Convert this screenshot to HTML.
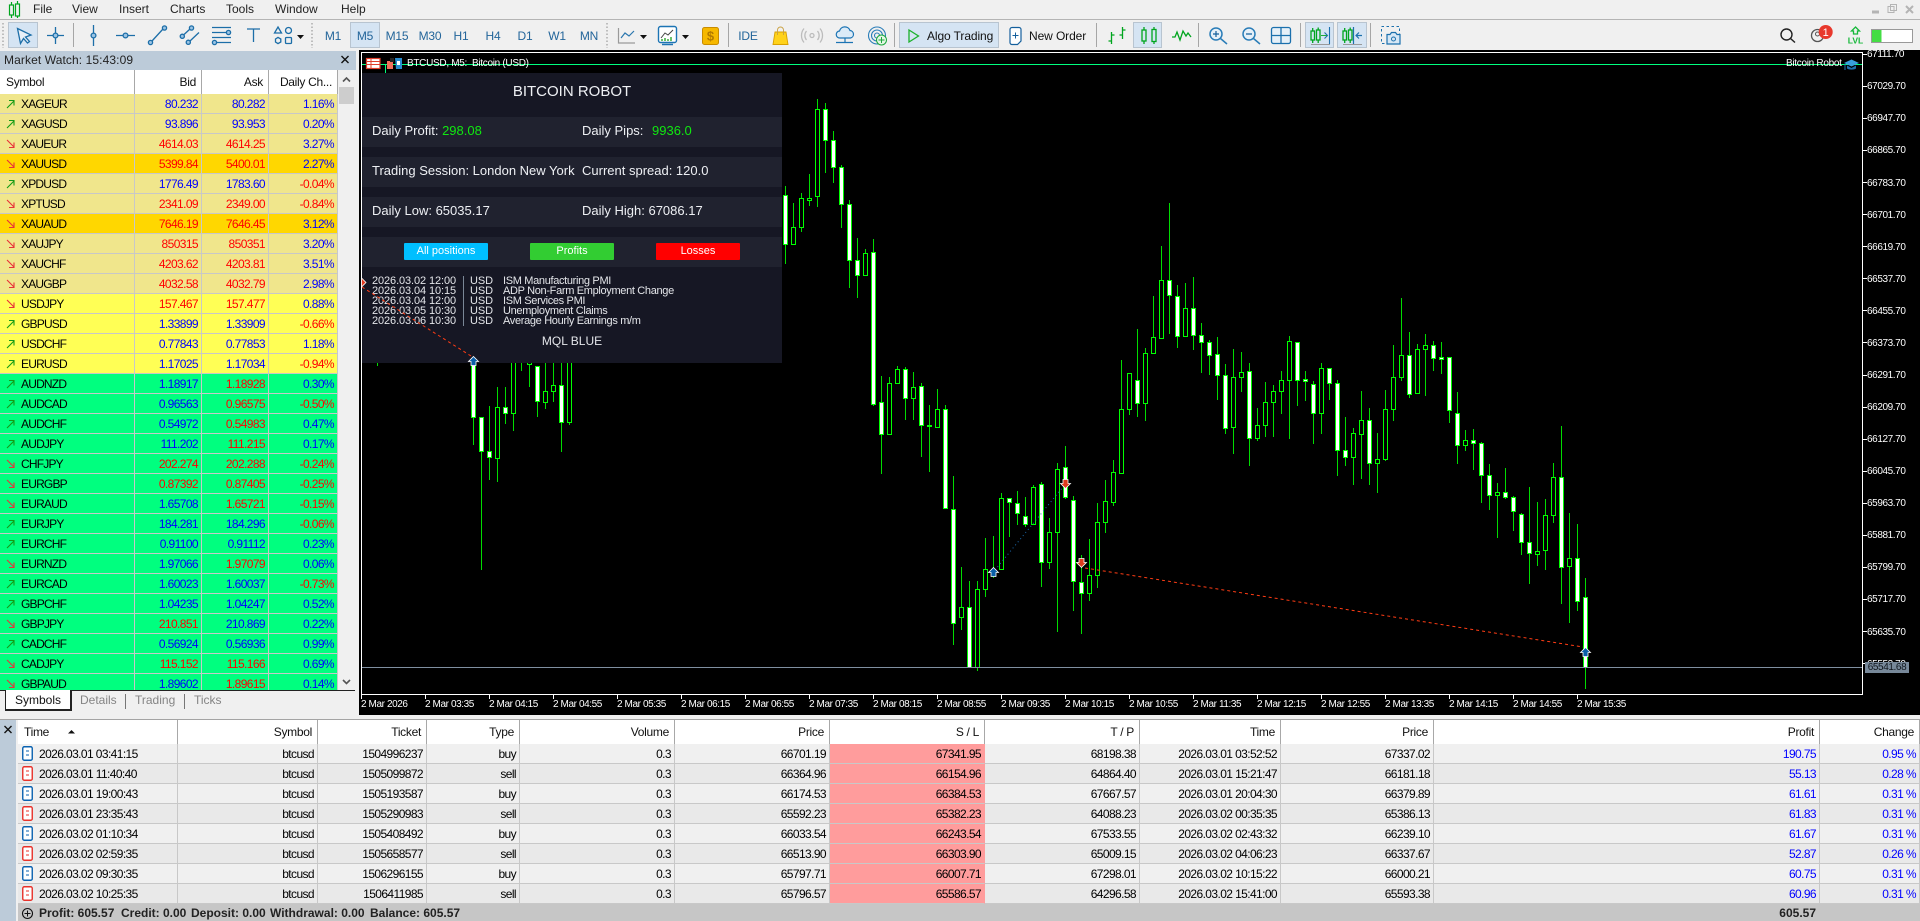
<!DOCTYPE html>
<html lang="en"><head><meta charset="utf-8"><title>MetaTrader 5</title>
<style>
html,body{margin:0;padding:0;width:1920px;height:921px;overflow:hidden;background:#f0f0f0;font-family:"Liberation Sans",Arial,sans-serif;font-size:12px;color:#000}
.t{position:absolute;white-space:nowrap;line-height:14px}
.abs{position:absolute}
svg.abs{left:0;top:0;overflow:visible}
table{border-collapse:separate;border-spacing:0;table-layout:fixed;position:absolute;letter-spacing:-.6px}
td,th{box-sizing:border-box;padding:0 3px 0 0;height:20px;line-height:16px;text-align:right;font-weight:normal;border-right:1px solid #c8c8c8;border-bottom:1px solid #c8c8c8;overflow:hidden;white-space:nowrap}
th{border-bottom:0;border-right:1px solid #a8a8a8;background:#fff;height:24px;color:#111;padding-right:5px;letter-spacing:-.3px}
#mw{left:0;top:70px;width:338px}
#mw td:first-child,#mw th:first-child{text-align:left}
#mw th:first-child{padding-left:6px}
#mw td:first-child{padding-left:6px;letter-spacing:-.8px}
#mw td{padding-right:3px}
#mw svg{width:9px;height:10px;margin-right:6px;vertical-align:-1px}
.k td{background:#f0e68c}.g td{background:#ffd700}.y td{background:#ffff55}.s td{background:#00ff7f}
.b{color:#0000ff}.r{color:#ff0000}
#tr{left:18px;top:720px;width:1902px}
#tr td:first-child,#tr th:first-child{text-align:left;padding-left:4px}
#tr th:first-child{padding-left:6px}
#tr svg{width:11px;height:15px;margin-right:6px;vertical-align:-3px}
#tr tr:nth-child(odd) td{background:#e9e9e9}
#tr td.l,#tr tr:nth-child(odd) td.l{background:#ff9c9c;border-right-color:#ff9c9c}
.d{font-size:13px;color:#eef0f4}
.gr{color:#10e810}
.btn{position:absolute;top:243px;height:17px;width:84px;border-radius:1px;color:#fff;font-size:11px;line-height:17px;text-align:center}
.n{font-size:11px;color:#e4e6ea;line-height:10px;letter-spacing:-.1px}
.e{letter-spacing:-.33px}
.ax{color:#fff;font-size:10px;letter-spacing:-.4px;line-height:12px;position:absolute;white-space:nowrap}
.m{position:absolute;top:2px;line-height:14px;font-size:12px;color:#222}
.tab{position:absolute;top:693px;font-size:12px;line-height:14px;color:#858585}
.rowp{position:absolute;left:362px;width:420px;height:30px;background:#20222f}
</style></head><body>

<svg width="0" height="0" style="position:absolute">
<defs>
<symbol id="u" viewBox="0 0 9 10"><path d="M1 9L8 2M3 1.5H8V6.5" fill="none" stroke="#159b15" stroke-width="1.1"/></symbol>
<symbol id="w" viewBox="0 0 9 10"><path d="M1 1L8 8M3 8.5H8V3.5" fill="none" stroke="#e8303a" stroke-width="1.1"/></symbol>
<symbol id="bd" viewBox="0 0 11 15"><rect x=".75" y=".75" width="9.5" height="13.5" rx="1.5" fill="#fff" stroke="#0a62b0" stroke-width="1.4"/><path d="M4 5h3M4 9h3" stroke="#0a62b0"/></symbol>
<symbol id="sd" viewBox="0 0 11 15"><rect x=".75" y=".75" width="9.5" height="13.5" rx="1.5" fill="#fff" stroke="#e8322a" stroke-width="1.4"/><path d="M4 5h3M4 9h3" stroke="#e8322a"/></symbol>
</defs>
</svg>

<!-- Menu -->
<div class="m" style="left:33px">File</div>
<div class="m" style="left:72px">View</div>
<div class="m" style="left:119px">Insert</div>
<div class="m" style="left:170px">Charts</div>
<div class="m" style="left:226px">Tools</div>
<div class="m" style="left:275px">Window</div>
<div class="m" style="left:341px">Help</div>
<div class="abs" style="left:0;top:19px;width:1920px;height:1px;background:#b4b4b4"></div>

<!-- Toolbar icons -->
<svg class="abs" width="1920" height="50" viewBox="0 0 1920 50" font-family="Liberation Sans, Arial, sans-serif">
<g fill="none" stroke="#00a51e" stroke-width="1.2"><rect x="9.5" y="5" width="4" height="10"/><rect x="15.5" y="4" width="4" height="12"/><path d="M11.5 2v3M11.5 15v3M17.5 1v3M17.5 16v2"/></g>
<g stroke="#b4b4b4" fill="none"><path d="M1872 12h7" stroke-width="3"/><rect x="1888" y="6.5" width="6" height="6"/><rect x="1890.5" y="4.5" width="6" height="6"/><path d="M1906 6l7 7M1913 6l-7 7" stroke-width="2"/></g>
<g stroke="#bdbdbd" stroke-dasharray="1.5 2" stroke-width="2" fill="none"><path d="M3 23V48M312 23V48M607 23V48"/></g>
<!-- active buttons -->
<g fill="#d5e4f3" stroke="#b8c4d0"><rect x="8.5" y="22.5" width="29" height="25"/><rect x="350.5" y="22.5" width="29" height="25"/><rect x="899.5" y="22.5" width="99" height="25"/><rect x="1133.5" y="22.5" width="28" height="25"/><rect x="1305.5" y="22.5" width="28" height="25"/><rect x="1337.5" y="22.5" width="29" height="25"/></g>
<g stroke="#a6a6a6" fill="none"><path d="M73.5 23V47M728.5 23V47M894.5 23V47M1096.5 23V47M1198.5 23V47M1300.5 23V47M1370.5 23V47"/></g>
<g fill="none" stroke="#1c6ea8" stroke-width="1.3">
<path d="M17.5 28.5L31 35L25.5 37L29.5 41.5L27.5 43L23.5 38.5L20.5 43.5Z" fill="#e8f0f8"/>
<path d="M47 35.5H64M55.5 27V44"/><circle cx="55.5" cy="35.5" r="2.4" fill="#9cc4e4"/>
<path d="M93.5 25V46"/><circle cx="93.5" cy="35.5" r="2.4" fill="#9cc4e4"/>
<path d="M116 35.5H135"/><circle cx="125.5" cy="35.5" r="2.4" fill="#9cc4e4"/>
<path d="M152 41L163 29"/><circle cx="150.5" cy="42.5" r="2.1" fill="#9cc4e4"/><circle cx="164.5" cy="28" r="2.1" fill="#9cc4e4"/>
<path d="M183.5 35L190 29M190 41L199 32.5"/><circle cx="182.3" cy="36.3" r="2.1" fill="#9cc4e4"/><circle cx="191.5" cy="28" r="2.1" fill="#9cc4e4"/><circle cx="188.3" cy="42.3" r="2.1" fill="#9cc4e4"/>
<path d="M212 27.5H231M212 32.5H226M212 37.5H231M217 42.5H231" stroke-width="1.2"/><circle cx="228.5" cy="32.5" r="2.1" fill="#9cc4e4"/><circle cx="214.5" cy="42.5" r="2.1" fill="#9cc4e4"/>
<path d="M247 29H260M253.5 29V42"/>
<path d="M278 27l3.5 6h-7z"/><circle cx="288.5" cy="30.5" r="3"/><path d="M275.5 39l2.5-1.6 2.8 1.6v3l-2.8 1.6-2.5-1.6z"/><rect x="285.5" y="37.5" width="6" height="6" rx="1"/>
</g>
<path d="M297 35h7l-3.5 4zM640 35h7l-3.5 4zM682 35h7l-3.5 4z" fill="#111"/>
<g font-size="12" fill="#23659a" text-anchor="middle" letter-spacing="-.2"><text x="333" y="40">M1</text><text x="365" y="40">M5</text><text x="397" y="40">M15</text><text x="430" y="40">M30</text><text x="461" y="40">H1</text><text x="493" y="40">H4</text><text x="525" y="40">D1</text><text x="557" y="40">W1</text><text x="589" y="40">MN</text><text x="748" y="40">IDE</text></g>
<path d="M618.5 28V43H635" fill="none" stroke="#9a9a9a" stroke-width="1.2"/><path d="M621 38L625 33L629 36L634 31" fill="none" stroke="#2a76ae" stroke-width="1.2"/>
<rect x="658.5" y="26.5" width="18" height="16" rx="2" fill="#fff" stroke="#1c74b4" stroke-width="1.4"/><path d="M662 44.5h11" stroke="#1c74b4" stroke-width="1.5"/><path d="M661 38l4-5 3 2 5-5" fill="none" stroke="#444"/><path d="M662 41v-2M665 41v-3M668 41v-2M671 41v-4" stroke="#1aa01a" stroke-width="1.3"/>
<rect x="702.5" y="27.5" width="16" height="17" rx="2" fill="#f6b800" stroke="#c88c00"/><text x="710.5" y="40.5" font-size="13" font-weight="bold" text-anchor="middle" fill="#b37a00">$</text>
<path d="M775 32h11l2 12.5h-15z" fill="#ffd21a" stroke="#d8a000" stroke-width=".9"/><path d="M777.5 35v-5a3 3 0 0 1 6 0v5" fill="none" stroke="#c9a040" stroke-width=".9"/>
<g fill="none" stroke="#bcbcbc" stroke-width="1.3"><circle cx="812" cy="35.5" r="2"/><path d="M806.5 31a7 7 0 0 0 0 9M817.5 31a7 7 0 0 1 0 9M804 28.5a11 11 0 0 0 0 14M820 28.5a11 11 0 0 1 0 14"/></g>
<path d="M840 38a3.5 3.5 0 0 1-.5-7 5.5 5.5 0 0 1 10.5-.5 3.8 3.8 0 0 1 .5 7.5zM845 38v4M836 42.5h17" fill="#dcebf7" stroke="#1c74b4" stroke-width="1.2"/>
<g fill="none" stroke="#2a7db8" stroke-width="1.1"><circle cx="877" cy="35.5" r="8.5"/><circle cx="877" cy="35.5" r="5.5"/><circle cx="877" cy="35.5" r="2.5"/></g>
<circle cx="881.5" cy="40" r="5" fill="#e4f6e4" stroke="#1ca83c"/><path d="M878.5 40h6M881.5 37v6" stroke="#1ca83c"/>
<path d="M909 30V42L918.5 36Z" fill="none" stroke="#1cb12c" stroke-width="1.3"/>
<text x="927" y="40" font-size="12" fill="#111" letter-spacing="-.1">Algo Trading</text>
<path d="M1012 27.5h7a2 2 0 0 1 2 2V41l-3.5 3.5H1012a2 2 0 0 1-2-2v-13a2 2 0 0 1 2-2z" fill="#fff" stroke="#145f9c" stroke-width="1.2"/><path d="M1012.5 35.5h6M1015.5 32.5v6" stroke="#145f9c"/>
<text x="1029" y="40" font-size="12" fill="#111" letter-spacing="-.1">New Order</text>
<g fill="none" stroke="#00a51e" stroke-width="1.3"><path d="M1111.5 32V44M1108.5 41h3M1111.5 35h3M1122.5 27V39M1119.5 35h3M1122.5 30h3"/>
<rect x="1142" y="30" width="4" height="11"/><rect x="1152" y="29.5" width="4" height="12"/><path d="M1144 27v3M1144 41v3M1154 27v3M1154 41v3"/>
<path d="M1172 37h3l2-5 3 8 3-9 3 5 2-3 3 4"/>
<rect x="1311" y="31" width="3.5" height="9"/><rect x="1316.5" y="30" width="3.5" height="10"/><path d="M1312.7 28v3M1312.7 40v3M1318.2 27.5v2.5M1318.2 40v3"/>
<rect x="1343" y="31" width="3.5" height="9"/><rect x="1348.5" y="30" width="3.5" height="10"/><path d="M1344.7 28v3M1344.7 40v3M1350.2 27.5v2.5M1350.2 40v3"/></g>
<path d="M1311 44.5h19M1343 44.5h19" stroke="#9a9a9a"/>
<path d="M1329.5 27v17M1321 35.5h6M1324.5 32.5l3 3-3 3" fill="none" stroke="#1b70ad" stroke-width="1.1"/><path d="M1321 35.5h6" stroke="#1ca83c"/>
<path d="M1353.5 27v17M1356 35.5h6M1359 32.5l-3 3 3 3" fill="none" stroke="#1b70ad" stroke-width="1.2"/>
<g fill="none" stroke="#2a7db8" stroke-width="1.5"><circle cx="1216" cy="34" r="6" fill="#e6f0f8"/><path d="M1220.5 38.5L1227 44"/><circle cx="1249" cy="34" r="6" fill="#e6f0f8"/><path d="M1253.5 38.5L1260 44"/></g>
<path d="M1213 34h6M1216 31v6M1246 34h6" stroke="#145f9c" stroke-width="1.2"/>
<g fill="none" stroke="#1b70ad" stroke-width="1.3"><rect x="1271.5" y="27.5" width="19" height="16" rx="2" fill="#e6f0f8"/><path d="M1281 27.5V43.5M1271.5 35.5H1290.5"/></g>
<rect x="1381.5" y="26.5" width="18" height="17" fill="none" stroke="#1b70ad" stroke-dasharray="2.5 2.5"/>
<path d="M1387 34.5h3l1.5-2h4l1.5 2h3v9.5h-13z" fill="#d6e7f5" stroke="#1b70ad" stroke-width="1.2"/><circle cx="1393.5" cy="39" r="2" fill="none" stroke="#1b70ad"/>
<circle cx="1786.5" cy="34.5" r="5.5" fill="none" stroke="#222" stroke-width="1.4"/><path d="M1790.5 38.5L1795 42.5" stroke="#222" stroke-width="1.5"/>
<circle cx="1817.5" cy="35.5" r="6" fill="none" stroke="#555" stroke-width="1.3"/><circle cx="1817.5" cy="34" r="2" fill="none" stroke="#555"/>
<circle cx="1825.7" cy="32" r="7" fill="#e8382c"/><text x="1825.7" y="36" font-size="11" fill="#fff" text-anchor="middle">1</text>
<path d="M1855.5 27l4 4h-2v3h-4v-3h-2z" fill="none" stroke="#16b83a" stroke-width="1.3"/><text x="1855.5" y="43.5" font-size="8.5" fill="#16b83a" text-anchor="middle" font-weight="bold">LVL</text>
<rect x="1871.5" y="29.5" width="41" height="13" fill="#fff" stroke="#999"/><rect x="1872" y="30" width="9.5" height="12" fill="#44dd44"/>
</svg>

<!-- Market watch -->
<div class="abs" style="left:0;top:51px;width:356px;height:19px;background:#bccbd9"></div>
<div class="t" style="left:4px;top:53px;color:#222;letter-spacing:.1px">Market Watch: 15:43:09</div>
<svg class="abs" width="360" height="100"><path d="M341.5 56l7 7M348.5 56l-7 7" stroke="#111" stroke-width="1.4"/><path d="M343 81.5l3.5-3.5 3.5 3.5" fill="none" stroke="#555" stroke-width="1.6"/></svg>
<div class="abs" style="left:339px;top:87px;width:15px;height:17px;background:#cdcdcd"></div>
<svg class="abs" width="360" height="700"><path d="M343 680l3.5 3.5 3.5-3.5" fill="none" stroke="#555" stroke-width="1.6"/></svg>
<div class="abs" style="left:0;top:70px;width:338px;height:620px;overflow:hidden">
<table id="mw" style="left:0;top:0">
<colgroup><col style="width:135px"><col style="width:67px"><col style="width:67px"><col style="width:69px"></colgroup>
<tr><th>Symbol</th><th>Bid</th><th>Ask</th><th>Daily Ch...</th></tr>
<tr class="k"><td><svg><use href="#u"/></svg>XAGEUR</td><td class="b">80.232</td><td class="b">80.282</td><td class="b">1.16%</td></tr>
<tr class="k"><td><svg><use href="#u"/></svg>XAGUSD</td><td class="b">93.896</td><td class="b">93.953</td><td class="b">0.20%</td></tr>
<tr class="k"><td><svg><use href="#w"/></svg>XAUEUR</td><td class="r">4614.03</td><td class="r">4614.25</td><td class="b">3.27%</td></tr>
<tr class="g"><td><svg><use href="#w"/></svg>XAUUSD</td><td class="r">5399.84</td><td class="r">5400.01</td><td class="b">2.27%</td></tr>
<tr class="k"><td><svg><use href="#u"/></svg>XPDUSD</td><td class="b">1776.49</td><td class="b">1783.60</td><td class="r">-0.04%</td></tr>
<tr class="k"><td><svg><use href="#w"/></svg>XPTUSD</td><td class="r">2341.09</td><td class="r">2349.00</td><td class="r">-0.84%</td></tr>
<tr class="g"><td><svg><use href="#w"/></svg>XAUAUD</td><td class="r">7646.19</td><td class="r">7646.45</td><td class="b">3.12%</td></tr>
<tr class="k"><td><svg><use href="#w"/></svg>XAUJPY</td><td class="r">850315</td><td class="r">850351</td><td class="b">3.20%</td></tr>
<tr class="k"><td><svg><use href="#w"/></svg>XAUCHF</td><td class="r">4203.62</td><td class="r">4203.81</td><td class="b">3.51%</td></tr>
<tr class="k"><td><svg><use href="#w"/></svg>XAUGBP</td><td class="r">4032.58</td><td class="r">4032.79</td><td class="b">2.98%</td></tr>
<tr class="y"><td><svg><use href="#w"/></svg>USDJPY</td><td class="r">157.467</td><td class="r">157.477</td><td class="b">0.88%</td></tr>
<tr class="y"><td><svg><use href="#u"/></svg>GBPUSD</td><td class="b">1.33899</td><td class="b">1.33909</td><td class="r">-0.66%</td></tr>
<tr class="y"><td><svg><use href="#u"/></svg>USDCHF</td><td class="b">0.77843</td><td class="b">0.77853</td><td class="b">1.18%</td></tr>
<tr class="y"><td><svg><use href="#u"/></svg>EURUSD</td><td class="b">1.17025</td><td class="b">1.17034</td><td class="r">-0.94%</td></tr>
<tr class="s"><td><svg><use href="#u"/></svg>AUDNZD</td><td class="b">1.18917</td><td class="r">1.18928</td><td class="b">0.30%</td></tr>
<tr class="s"><td><svg><use href="#u"/></svg>AUDCAD</td><td class="b">0.96563</td><td class="r">0.96575</td><td class="r">-0.50%</td></tr>
<tr class="s"><td><svg><use href="#u"/></svg>AUDCHF</td><td class="b">0.54972</td><td class="r">0.54983</td><td class="b">0.47%</td></tr>
<tr class="s"><td><svg><use href="#u"/></svg>AUDJPY</td><td class="b">111.202</td><td class="r">111.215</td><td class="b">0.17%</td></tr>
<tr class="s"><td><svg><use href="#w"/></svg>CHFJPY</td><td class="r">202.274</td><td class="r">202.288</td><td class="r">-0.24%</td></tr>
<tr class="s"><td><svg><use href="#w"/></svg>EURGBP</td><td class="r">0.87392</td><td class="r">0.87405</td><td class="r">-0.25%</td></tr>
<tr class="s"><td><svg><use href="#w"/></svg>EURAUD</td><td class="b">1.65708</td><td class="r">1.65721</td><td class="r">-0.15%</td></tr>
<tr class="s"><td><svg><use href="#u"/></svg>EURJPY</td><td class="b">184.281</td><td class="b">184.296</td><td class="r">-0.06%</td></tr>
<tr class="s"><td><svg><use href="#u"/></svg>EURCHF</td><td class="b">0.91100</td><td class="b">0.91112</td><td class="b">0.23%</td></tr>
<tr class="s"><td><svg><use href="#w"/></svg>EURNZD</td><td class="b">1.97066</td><td class="r">1.97079</td><td class="b">0.06%</td></tr>
<tr class="s"><td><svg><use href="#u"/></svg>EURCAD</td><td class="b">1.60023</td><td class="b">1.60037</td><td class="r">-0.73%</td></tr>
<tr class="s"><td><svg><use href="#u"/></svg>GBPCHF</td><td class="b">1.04235</td><td class="b">1.04247</td><td class="b">0.52%</td></tr>
<tr class="s"><td><svg><use href="#w"/></svg>GBPJPY</td><td class="r">210.851</td><td class="b">210.869</td><td class="b">0.22%</td></tr>
<tr class="s"><td><svg><use href="#u"/></svg>CADCHF</td><td class="b">0.56924</td><td class="b">0.56936</td><td class="b">0.99%</td></tr>
<tr class="s"><td><svg><use href="#w"/></svg>CADJPY</td><td class="r">115.152</td><td class="r">115.166</td><td class="b">0.69%</td></tr>
<tr class="s"><td><svg><use href="#w"/></svg>GBPAUD</td><td class="b">1.89602</td><td class="r">1.89615</td><td class="b">0.14%</td></tr>
</table></div>

<!-- tabs -->
<div class="abs" style="left:0;top:690px;width:355px;height:1px;background:#222"></div>
<div class="abs" style="left:5px;top:690px;width:64px;height:19px;background:#fff;border:1px solid #222;border-top:0;border-bottom-width:2px;border-right-width:2px"></div>
<div class="tab" style="left:15px;color:#111">Symbols</div>
<div class="tab" style="left:80px">Details</div><div class="abs" style="left:125px;top:694px;width:1px;height:15px;background:#777"></div>
<div class="tab" style="left:135px">Trading</div><div class="abs" style="left:184px;top:694px;width:1px;height:15px;background:#777"></div>
<div class="tab" style="left:194px">Ticks</div>

<!-- Chart -->
<div class="abs" style="left:359px;top:50px;width:1561px;height:665px;background:#000"></div>
<svg class="abs" width="1920" height="921" viewBox="0 0 1920 921">
<path d="M361.5 52.5H1862.5V694.5H361.5Z" fill="none" stroke="#fff"/>
<path d="M425.5 694V699M489.5 694V699M553.5 694V699M617.5 694V699M681.5 694V699M745.5 694V699M809.5 694V699M873.5 694V699M937.5 694V699M1001.5 694V699M1065.5 694V699M1129.5 694V699M1193.5 694V699M1257.5 694V699M1321.5 694V699M1385.5 694V699M1449.5 694V699M1513.5 694V699M1577.5 694V699M361.5 694V699" stroke="#fff"/>
<path d="M1863 54.5h4M1863 86.5h4M1863 118.5h4M1863 150.5h4M1863 182.5h4M1863 214.5h4M1863 246.5h4M1863 278.5h4M1863 310.5h4M1863 342.5h4M1863 375.5h4M1863 407.5h4M1863 439.5h4M1863 471.5h4M1863 503.5h4M1863 535.5h4M1863 567.5h4M1863 599.5h4M1863 631.5h4M1863 663.5h4" stroke="#fff"/>
<path d="M362 64.5H1862" stroke="#00ff7f"/><path d="M385.5 64V73" stroke="#00ff7f"/>
<!-- wicks -->
<path fill="none" stroke="#00dc00" d="M377.5 363V366M473.5 361V445M481.5 417V570M489.5 406V480M497.5 387V482M505.5 387V424M513.5 340V431M521.5 360V371M529.5 360V387M537.5 366V417M545.5 360V409M553.5 360V402M561.5 360V452M569.5 360V425
M785.5 186V264M793.5 203V244M801.5 193V232M809.5 174V206M817.5 99V207M825.5 103V173M833.5 131V183M841.5 165V228M849.5 200V288M857.5 238V298M865.5 249V276M873.5 239V406M881.5 376V474M889.5 377V435M897.5 366V384M905.5 367V420M913.5 372V420M921.5 383V457M929.5 405V472M937.5 389V428M945.5 405V509M953.5 476V645M961.5 567V630M969.5 581V668M977.5 581V671M985.5 538V597M993.5 536V578M1001.5 493V569M1009.5 498V537M1017.5 491V525M1025.5 497V527M1033.5 485V524M1041.5 482V587M1049.5 518V569M1057.5 463V632M1065.5 446V499M1073.5 496V611M1081.5 555V634M1089.5 539V601M1097.5 503V588M1105.5 480V533M1113.5 460V506M1121.5 360V473M1129.5 373V415M1137.5 329V417M1145.5 348V421M1153.5 296V353M1161.5 246V338M1169.5 203V334M1177.5 285V348M1185.5 283V336M1193.5 277V350M1201.5 323V373M1209.5 340V375M1217.5 337V400M1225.5 364V434M1233.5 349V454M1241.5 352V392M1249.5 363V466M1257.5 408V441M1265.5 382V437M1273.5 385V437M1281.5 371V414M1289.5 336V439M1297.5 342V406M1305.5 371V401M1313.5 381V444M1321.5 363V434M1329.5 368V400M1337.5 380V476M1345.5 417V466M1353.5 428V485M1361.5 391V479M1369.5 408V485M1377.5 433V493M1385.5 390V461M1393.5 345V421M1401.5 298V381M1409.5 332V398M1417.5 344V394M1425.5 334V396M1433.5 341V371M1441.5 342V374M1449.5 357V423M1457.5 392V464M1465.5 430V451M1473.5 429V470M1481.5 442V503M1489.5 464V510M1497.5 483V538M1505.5 468V499M1513.5 496V531M1521.5 513V555M1529.5 487V584M1537.5 502V566M1545.5 499V570M1553.5 463V523M1561.5 426V604M1569.5 513V623M1577.5 524V611M1585.5 578V689"/>
<!-- hollow -->
<path fill="#000" stroke="#00ff00" d="M495.5 407.5h4v51h-4zM511.5 340.5h4v73h-4zM527.5 350.5h4v14h-4zM543.5 391.5h4v11h-4zM551.5 385.5h4v6h-4zM567.5 340.5h4v82h-4z
M791.5 227.5h4v17h-4zM799.5 198.5h4v29h-4zM807.5 198.5h4v2h-4zM815.5 109.5h4v87h-4zM863.5 253.5h4v22h-4zM887.5 383.5h4v51h-4zM895.5 369.5h4v14h-4zM911.5 387.5h4v11h-4zM935.5 409.5h4v18h-4zM959.5 607.5h4v10h-4zM975.5 589.5h4v78h-4zM983.5 569.5h4v20h-4zM999.5 498.5h4v71h-4zM1031.5 487.5h4v37h-4zM1047.5 532.5h4v30h-4zM1055.5 469.5h4v63h-4zM1087.5 575.5h4v18h-4zM1095.5 522.5h4v53h-4zM1103.5 501.5h4v21h-4zM1111.5 472.5h4v30h-4zM1119.5 409.5h4v64h-4zM1127.5 373.5h4v36h-4zM1143.5 353.5h4v50h-4zM1151.5 337.5h4v16h-4zM1159.5 280.5h4v58h-4zM1183.5 308.5h4v28h-4zM1231.5 377.5h4v50h-4zM1239.5 372.5h4v5h-4zM1255.5 425.5h4v13h-4zM1263.5 402.5h4v23h-4zM1271.5 391.5h4v11h-4zM1279.5 380.5h4v11h-4zM1287.5 341.5h4v39h-4zM1319.5 368.5h4v45h-4zM1351.5 433.5h4v24h-4zM1359.5 420.5h4v14h-4zM1375.5 459.5h4v4h-4zM1383.5 409.5h4v50h-4zM1391.5 377.5h4v32h-4zM1399.5 355.5h4v22h-4zM1415.5 349.5h4v44h-4zM1423.5 345.5h4v4h-4zM1463.5 440.5h4v5h-4zM1495.5 492.5h4v3h-4zM1535.5 551.5h4v3h-4zM1543.5 515.5h4v35h-4zM1551.5 477.5h4v38h-4zM1567.5 558.5h4v8h-4z"/>
<!-- white bodies -->
<path fill="#fff" stroke="#00ff00" d="M471.5 361.5h4v56h-4zM479.5 417.5h4v34h-4zM487.5 451.5h4v6h-4zM503.5 407.5h4v6h-4zM535.5 366.5h4v35h-4zM559.5 385.5h4v37h-4z
M783.5 195.5h4v49h-4zM823.5 109.5h4v31h-4zM831.5 140.5h4v27h-4zM839.5 167.5h4v37h-4zM847.5 204.5h4v56h-4zM855.5 260.5h4v15h-4zM871.5 252.5h4v152h-4zM879.5 402.5h4v32h-4zM903.5 369.5h4v29h-4zM919.5 386.5h4v39h-4zM927.5 425.5h4v1h-4zM943.5 409.5h4v99h-4zM951.5 509.5h4v114h-4zM967.5 607.5h4v60h-4zM1007.5 498.5h4v4h-4zM1015.5 503.5h4v10h-4zM1023.5 516.5h4v8h-4zM1039.5 484.5h4v78h-4zM1063.5 467.5h4v30h-4zM1071.5 500.5h4v81h-4zM1079.5 582.5h4v11h-4zM1135.5 380.5h4v23h-4zM1167.5 280.5h4v15h-4zM1175.5 296.5h4v40h-4zM1191.5 308.5h4v27h-4zM1199.5 335.5h4v7h-4zM1207.5 342.5h4v13h-4zM1215.5 354.5h4v21h-4zM1223.5 375.5h4v53h-4zM1247.5 371.5h4v67h-4zM1295.5 342.5h4v38h-4zM1303.5 379.5h4v2h-4zM1311.5 384.5h4v29h-4zM1327.5 368.5h4v15h-4zM1335.5 383.5h4v67h-4zM1343.5 450.5h4v7h-4zM1367.5 420.5h4v43h-4zM1407.5 355.5h4v39h-4zM1431.5 345.5h4v13h-4zM1439.5 357.5h4v2h-4zM1447.5 357.5h4v53h-4zM1455.5 413.5h4v32h-4zM1471.5 440.5h4v3h-4zM1479.5 443.5h4v32h-4zM1487.5 475.5h4v20h-4zM1503.5 492.5h4v5h-4zM1511.5 497.5h4v14h-4zM1519.5 514.5h4v28h-4zM1527.5 542.5h4v11h-4zM1559.5 477.5h4v90h-4zM1575.5 558.5h4v43h-4zM1583.5 597.5h4v70h-4z"/>
<path d="M362 667.5H1862" stroke="#7f8fa0"/>
</svg>

<!-- Chart labels -->
<div class="ax" style="left:407px;top:58px;letter-spacing:-.3px">BTCUSD, M5:&nbsp; Bitcoin (USD)</div>
<div class="ax" style="left:1786px;top:58px;letter-spacing:-.3px">Bitcoin Robot</div>
<svg class="abs" width="1920" height="80">
<rect x="366.5" y="58.5" width="13.5" height="10" fill="#fff" stroke="#e0402c" stroke-width="1.2"/><path d="M366.5 61.5H380M366.5 64.5H380M371 58.5V68.5" stroke="#e0402c"/>
<path d="M387 61h6v8h-6z" fill="#f0705c"/><rect x="390" y="58" width="4" height="4" fill="#222"/><path d="M395 58h7v11h-6z" fill="#2a8ed0"/><rect x="397" y="61" width="3" height="4" fill="#fff"/>
<path d="M1844 63l7.5-3.5 7.5 3.5-7.5 3.5z" fill="#3a9edc"/><path d="M1847 65.5v3c2 1.5 7 1.5 9 0v-3l-4.5 2.5z" fill="#1f6fae"/><path d="M1845 64v6" stroke="#1f6fae"/>
</svg>
<div class="abs" style="left:0;top:1px">
<div class="ax" style="left:1867px;top:48px">67111.70</div>
<div class="ax" style="left:1867px;top:80px">67029.70</div>
<div class="ax" style="left:1867px;top:112px">66947.70</div>
<div class="ax" style="left:1867px;top:144px">66865.70</div>
<div class="ax" style="left:1867px;top:177px">66783.70</div>
<div class="ax" style="left:1867px;top:209px">66701.70</div>
<div class="ax" style="left:1867px;top:241px">66619.70</div>
<div class="ax" style="left:1867px;top:273px">66537.70</div>
<div class="ax" style="left:1867px;top:305px">66455.70</div>
<div class="ax" style="left:1867px;top:337px">66373.70</div>
<div class="ax" style="left:1867px;top:369px">66291.70</div>
<div class="ax" style="left:1867px;top:401px">66209.70</div>
<div class="ax" style="left:1867px;top:433px">66127.70</div>
<div class="ax" style="left:1867px;top:465px">66045.70</div>
<div class="ax" style="left:1867px;top:497px">65963.70</div>
<div class="ax" style="left:1867px;top:529px">65881.70</div>
<div class="ax" style="left:1867px;top:561px">65799.70</div>
<div class="ax" style="left:1867px;top:593px">65717.70</div>
<div class="ax" style="left:1867px;top:626px">65635.70</div>
<div class="ax" style="left:1867px;top:658px">65553.70</div>
</div>
<div class="ax" style="left:1865px;top:662px;width:44px;height:11px;line-height:11px;background:#778899;color:#10161c;text-align:center">65541.68</div>
<div class="abs" style="left:0;top:1px">
<div class="ax" style="left:361px;top:698px">2 Mar 2026</div>
<div class="ax" style="left:425px;top:698px">2 Mar 03:35</div>
<div class="ax" style="left:489px;top:698px">2 Mar 04:15</div>
<div class="ax" style="left:553px;top:698px">2 Mar 04:55</div>
<div class="ax" style="left:617px;top:698px">2 Mar 05:35</div>
<div class="ax" style="left:681px;top:698px">2 Mar 06:15</div>
<div class="ax" style="left:745px;top:698px">2 Mar 06:55</div>
<div class="ax" style="left:809px;top:698px">2 Mar 07:35</div>
<div class="ax" style="left:873px;top:698px">2 Mar 08:15</div>
<div class="ax" style="left:937px;top:698px">2 Mar 08:55</div>
<div class="ax" style="left:1001px;top:698px">2 Mar 09:35</div>
<div class="ax" style="left:1065px;top:698px">2 Mar 10:15</div>
<div class="ax" style="left:1129px;top:698px">2 Mar 10:55</div>
<div class="ax" style="left:1193px;top:698px">2 Mar 11:35</div>
<div class="ax" style="left:1257px;top:698px">2 Mar 12:15</div>
<div class="ax" style="left:1321px;top:698px">2 Mar 12:55</div>
<div class="ax" style="left:1385px;top:698px">2 Mar 13:35</div>
<div class="ax" style="left:1449px;top:698px">2 Mar 14:15</div>
<div class="ax" style="left:1513px;top:698px">2 Mar 14:55</div>
<div class="ax" style="left:1577px;top:698px">2 Mar 15:35</div>
</div>

<!-- Robot panel -->
<div class="abs" style="left:362px;top:73px;width:420px;height:290px;background:#161724"></div>
<div class="rowp" style="top:117px"></div>
<div class="rowp" style="top:157px"></div>
<div class="rowp" style="top:197px"></div>
<div class="rowp" style="top:237px"></div>
<div class="t" style="left:362px;width:420px;text-align:center;top:83px;font-size:15px;line-height:18px;color:#eef0f4">BITCOIN ROBOT</div>
<div class="t d" style="left:372px;top:124px">Daily Profit: <span class="gr">298.08</span></div>
<div class="t d" style="left:582px;top:124px">Daily Pips:</div><div class="t d gr" style="left:652px;top:124px">9936.0</div>
<div class="t d" style="left:372px;top:164px">Trading Session: London New York</div>
<div class="t d" style="left:582px;top:164px">Current spread: 120.0</div>
<div class="t d" style="left:372px;top:204px">Daily Low: 65035.17</div>
<div class="t d" style="left:582px;top:204px">Daily High: 67086.17</div>
<div class="btn" style="left:404px;background:#00bfff">All positions</div>
<div class="btn" style="left:530px;background:#32cd32">Profits</div>
<div class="btn" style="left:656px;background:#ff0000">Losses</div>
<div class="abs" style="left:463px;top:276px;width:1px;height:50px;background:#7a8796"></div>
<div class="t n" style="left:372px;top:276px">2026.03.02 12:00</div><div class="t n" style="left:470px;top:276px">USD</div><div class="t n e" style="left:503px;top:276px">ISM Manufacturing PMI</div>
<div class="t n" style="left:372px;top:286px">2026.03.04 10:15</div><div class="t n" style="left:470px;top:286px">USD</div><div class="t n e" style="left:503px;top:286px">ADP Non-Farm Employment Change</div>
<div class="t n" style="left:372px;top:296px">2026.03.04 12:00</div><div class="t n" style="left:470px;top:296px">USD</div><div class="t n e" style="left:503px;top:296px">ISM Services PMI</div>
<div class="t n" style="left:372px;top:306px">2026.03.05 10:30</div><div class="t n" style="left:470px;top:306px">USD</div><div class="t n e" style="left:503px;top:306px">Unemployment Claims</div>
<div class="t n" style="left:372px;top:316px">2026.03.06 10:30</div><div class="t n" style="left:470px;top:316px">USD</div><div class="t n e" style="left:503px;top:316px">Average Hourly Earnings m/m</div>
<div class="t" style="left:362px;width:420px;text-align:center;top:334px;color:#e4e6ea">MQL BLUE</div>

<!-- Trade arrows and lines -->
<svg class="abs" width="1920" height="921" viewBox="0 0 1920 921">
<g fill="none" stroke="#ff3c14" stroke-dasharray="3 3"><path d="M362 287L471 356"/><path d="M1085 568L1583 647"/></g>
<path d="M995 570L1063 487" fill="none" stroke="#1a6ab0" stroke-dasharray="1 3"/>
<g stroke="#fff" stroke-width=".8">
<path d="M473.5 356.5l5 5h-2.5v4h-5v-4h-2.5z" fill="#0a5fa8"/>
<path d="M993.5 567.5l5 5h-2.5v4h-5v-4h-2.5z" fill="#0a5fa8"/>
<path d="M1585.5 647.5l5 5h-2.5v4h-5v-4h-2.5z" fill="#0a5fa8"/>
<path d="M1065.5 488.5l5-5h-2.5v-4h-5v4h-2.5z" fill="#e03a1e"/>
<path d="M1081.5 567.5l5-5h-2.5v-4h-5v4h-2.5z" fill="#e03a1e"/>
<path d="M361.5 278v9l4.5-4.5z" fill="#e03a1e"/>
</g>
</svg>

<!-- Trades -->
<div class="abs" style="left:0;top:719px;width:1920px;height:1px;background:#a4a4a4"></div>
<div class="abs" style="left:0;top:720px;width:16px;height:201px;background:#bccbd9"></div>
<svg class="abs" width="20" height="921"><path d="M4.5 726l7 7M11.5 726l-7 7" stroke="#111" stroke-width="1.4"/></svg>
<table id="tr">
<colgroup><col style="width:160px"><col style="width:140px"><col style="width:109px"><col style="width:93px"><col style="width:155px"><col style="width:155px"><col style="width:155px"><col style="width:155px"><col style="width:141px"><col style="width:153px"><col style="width:386px"><col style="width:100px"></colgroup>
<tr><th>Time</th><th>Symbol</th><th>Ticket</th><th>Type</th><th>Volume</th><th>Price</th><th>S / L</th><th>T / P</th><th>Time</th><th>Price</th><th>Profit</th><th>Change</th></tr>
<tr><td><svg><use href="#bd"/></svg>2026.03.01 03:41:15</td><td>btcusd</td><td>1504996237</td><td>buy</td><td>0.3</td><td>66701.19</td><td class="l">67341.95</td><td>68198.38</td><td>2026.03.01 03:52:52</td><td>67337.02</td><td class="b">190.75</td><td class="b">0.95 %</td></tr>
<tr><td><svg><use href="#sd"/></svg>2026.03.01 11:40:40</td><td>btcusd</td><td>1505099872</td><td>sell</td><td>0.3</td><td>66364.96</td><td class="l">66154.96</td><td>64864.40</td><td>2026.03.01 15:21:47</td><td>66181.18</td><td class="b">55.13</td><td class="b">0.28 %</td></tr>
<tr><td><svg><use href="#bd"/></svg>2026.03.01 19:00:43</td><td>btcusd</td><td>1505193587</td><td>buy</td><td>0.3</td><td>66174.53</td><td class="l">66384.53</td><td>67667.57</td><td>2026.03.01 20:04:30</td><td>66379.89</td><td class="b">61.61</td><td class="b">0.31 %</td></tr>
<tr><td><svg><use href="#sd"/></svg>2026.03.01 23:35:43</td><td>btcusd</td><td>1505290983</td><td>sell</td><td>0.3</td><td>65592.23</td><td class="l">65382.23</td><td>64088.23</td><td>2026.03.02 00:35:35</td><td>65386.13</td><td class="b">61.83</td><td class="b">0.31 %</td></tr>
<tr><td><svg><use href="#bd"/></svg>2026.03.02 01:10:34</td><td>btcusd</td><td>1505408492</td><td>buy</td><td>0.3</td><td>66033.54</td><td class="l">66243.54</td><td>67533.55</td><td>2026.03.02 02:43:32</td><td>66239.10</td><td class="b">61.67</td><td class="b">0.31 %</td></tr>
<tr><td><svg><use href="#sd"/></svg>2026.03.02 02:59:35</td><td>btcusd</td><td>1505658577</td><td>sell</td><td>0.3</td><td>66513.90</td><td class="l">66303.90</td><td>65009.15</td><td>2026.03.02 04:06:23</td><td>66337.67</td><td class="b">52.87</td><td class="b">0.26 %</td></tr>
<tr><td><svg><use href="#bd"/></svg>2026.03.02 09:30:35</td><td>btcusd</td><td>1506296155</td><td>buy</td><td>0.3</td><td>65797.71</td><td class="l">66007.71</td><td>67298.01</td><td>2026.03.02 10:15:22</td><td>66000.21</td><td class="b">60.75</td><td class="b">0.31 %</td></tr>
<tr><td><svg><use href="#sd"/></svg>2026.03.02 10:25:35</td><td>btcusd</td><td>1506411985</td><td>sell</td><td>0.3</td><td>65796.57</td><td class="l">65586.57</td><td>64296.58</td><td>2026.03.02 15:41:00</td><td>65593.38</td><td class="b">60.96</td><td class="b">0.31 %</td></tr>
</table>
<svg class="abs" width="120" height="921"><path d="M68 733.5l3.5-3.5 3.5 3.5z" fill="#111"/></svg>
<div class="abs" style="left:18px;top:904px;width:1902px;height:17px;background:#c6c6c6"></div>
<svg class="abs" width="40" height="921"><circle cx="27.5" cy="913.5" r="5" fill="none" stroke="#111" stroke-width="1.1"/><path d="M24.5 913.5h6M27.5 910.5v6" stroke="#111"/></svg>
<b class="t" style="left:39px;top:906px;color:#222">Profit: 605.57</b>
<b class="t" style="left:121px;top:906px;color:#222">Credit: 0.00</b>
<b class="t" style="left:191px;top:906px;color:#222">Deposit: 0.00</b>
<b class="t" style="left:270px;top:906px;color:#222">Withdrawal: 0.00</b>
<b class="t" style="left:370px;top:906px;color:#222">Balance: 605.57</b>
<b class="t" style="right:104px;top:906px;color:#222">605.57</b>
</body></html>
